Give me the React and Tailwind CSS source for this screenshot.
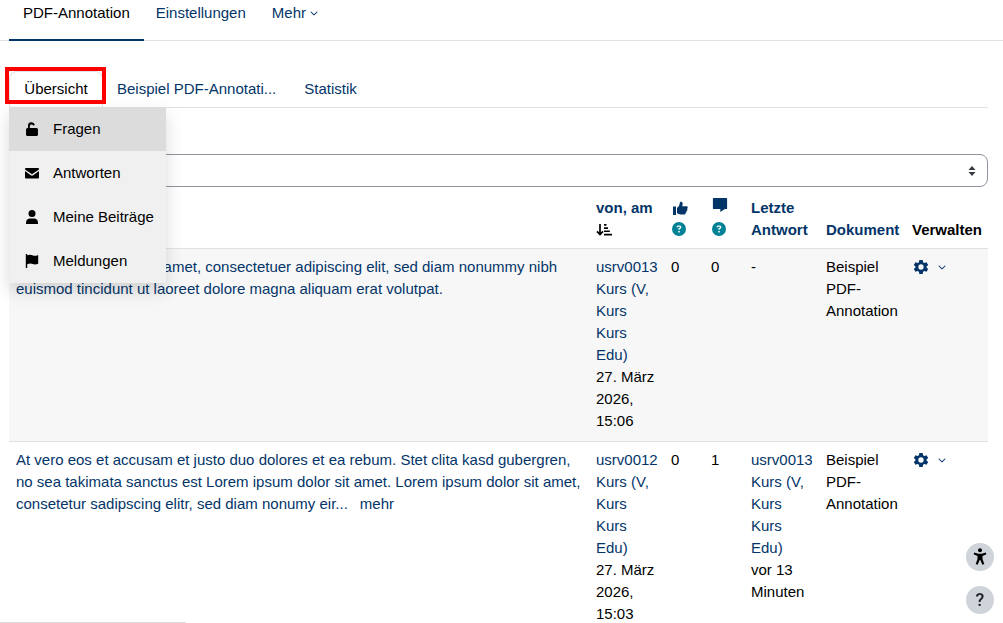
import React from 'react';
import { FaChevronDown, FaCircleQuestion } from 'react-icons/fa6';

function UnlockIcon() {
  return (
    <svg viewBox="0 0 14 14" className="w-[14px] h-[14px] shrink-0" fill="currentColor" aria-hidden="true">
      <path d="M3 6V4a3.500 3.500 0 0 1 6.900-1l-1.700.5A1.800 1.800 0 0 0 4.800 4v2H11.500A1.500 1.500 0 0 1 13 7.500v5A1.500 1.500 0 0 1 11.500 14h-9A1.500 1.500 0 0 1 1 12.500v-5A1.500 1.500 0 0 1 2.500 6z" />
    </svg>
  );
}

function EnvelopeIcon() {
  return (
    <svg viewBox="0 0 14 14" className="w-[14px] h-[14px] shrink-0" fill="currentColor" aria-hidden="true">
      <path d="M0 3a1 1 0 0 1 1-1h12a1 1 0 0 1 1 1v.6L7 8.200 0 3.600z" />
      <path d="M0 5l5.800 4.200a2 2 0 0 0 2.400 0L14 5v6.500a1 1 0 0 1-1 1H1a1 1 0 0 1-1-1z" />
    </svg>
  );
}

function UserIcon() {
  return (
    <svg viewBox="0 0 14 14" className="w-[14px] h-[14px] shrink-0" fill="currentColor" aria-hidden="true">
      <circle cx="7" cy="3.500" r="3.500" />
      <path d="M1 14v-1.500C1 10 3 8.500 5 8.500h4c2 0 4 1.500 4 4V14z" />
    </svg>
  );
}

function FlagIcon() {
  return (
    <svg viewBox="0 0 14 14" className="w-[14px] h-[14px] shrink-0" fill="currentColor" aria-hidden="true">
      <path d="M.8 0h1.400v1.300C5 .2 6.300.8 8 1.500c1.600.6 3 .4 5.200-.5v8.700c-2 .9-3.700 1-5.300.4-1.800-.7-3.200-.8-5.700.1V14H.8z" />
    </svg>
  );
}

function SortIcon() {
  return (
    <svg viewBox="0 0 16 12" className="w-4 h-3" aria-hidden="true">
      <path d="M4 0v10M1 7.300l3 3.200 3-3.200" fill="none" stroke="currentColor" strokeWidth="1.700" />
      <path d="M8 0h2.500v1.700H8zM8 3.200h4v1.700H8zM8 6.400h5.800v1.700H8zM8 9.700h8v1.900H8z" fill="currentColor" />
    </svg>
  );
}

function ThumbsUpIcon() {
  return (
    <svg viewBox="0 0 16 14" className="w-4 h-[14px]" fill="currentColor" aria-hidden="true">
      <path d="M1 5.500h3V14H1z" />
      <path d="M5 6.700c1.700-1 2.500-2.500 2.700-4.500C7.900.9 8.700.6 9.600.9c1.300.5 1.400 2.200.5 4.300h4.200c1.600 0 1.900 1.900.8 2.500.6.900.3 1.800-.6 2.200.3.900-.1 1.600-.8 1.900.1 1-.6 1.700-1.700 1.700H8.600c-1.400 0-2.400-.5-3.600-1.400z" />
    </svg>
  );
}

function CommentIcon() {
  return (
    <svg viewBox="0 0 16 16" className="w-4 h-4" fill="currentColor" aria-hidden="true">
      <path d="M1.500 1h13a.6.6 0 0 1 .6.6v9.800a.6.6 0 0 1-.6.6h-1.700L8.300 15v-3H1.500a.6.6 0 0 1-.6-.6V1.600a.6.6 0 0 1 .6-.6z" />
    </svg>
  );
}

function GearIcon() {
  return (
    <svg viewBox="0 0 24 24" className="w-4 h-4" fill="currentColor" aria-hidden="true">
      <path
        fillRule="evenodd"
        d="M9.500 1.500h5l.6 3.200 2 1.200 3.200-1.100 2.500 4.300-2.500 2.100v1.600l2.500 2.100-2.500 4.300-3.200-1.100-2 1.200-.6 3.200h-5l-.6-3.200-2-1.200-3.200 1.100-2.500-4.300 2.500-2.100v-1.600L1.200 9.100l2.500-4.300 3.200 1.100 2-1.200zM12 8a4 4 0 1 0 0 8 4 4 0 0 0 0-8z"
      />
    </svg>
  );
}

function AccessibilityIcon() {
  return (
    <svg viewBox="0 0 20 20" className="w-5 h-5" fill="currentColor" aria-hidden="true">
      <circle cx="10" cy="3.200" r="2" />
      <path d="M4.200 5.500 8.200 6.700h3.600l4-1.200.6 1.800-3.900 1.700v3l1.800 5-1.900.8-2.100-4.800h-.6l-2.100 4.800-1.900-.8 1.800-5v-3L3.600 7.300z" />
    </svg>
  );
}

function HelpButton({ label }) {
  return (
    <button type="button" aria-label={label} className="block text-[#008196]">
      <FaCircleQuestion size={14} />
    </button>
  );
}

const menuItems = [
  { label: 'Fragen', icon: UnlockIcon, active: true },
  { label: 'Antworten', icon: EnvelopeIcon },
  { label: 'Meine Beiträge', icon: UserIcon },
  { label: 'Meldungen', icon: FlagIcon },
];

const rows = [
  {
    text: 'Lorem ipsum dolor sit amet, consectetuer adipiscing elit, sed diam nonummy nibh euismod tincidunt ut laoreet dolore magna aliquam erat volutpat.',
    author: 'usrv0013 Kurs (V, Kurs Kurs Edu)',
    date: '27. März 2026, 15:06',
    votes: 0,
    answers: 0,
    last: null,
  },
  {
    text: 'At vero eos et accusam et justo duo dolores et ea rebum. Stet clita kasd gubergren, no sea takimata sanctus est Lorem ipsum dolor sit amet. Lorem ipsum dolor sit amet, consetetur sadipscing elitr, sed diam nonumy eir...',
    more: true,
    author: 'usrv0012 Kurs (V, Kurs Kurs Edu)',
    date: '27. März 2026, 15:03',
    votes: 0,
    answers: 1,
    last: { author: 'usrv0013 Kurs (V, Kurs Kurs Edu)', when: 'vor 13 Minuten' },
  },
];

export default function App() {
  return (
    <div className="h-screen overflow-hidden bg-white text-black text-[15px] leading-[22px] font-['Liberation_Sans',Arial,sans-serif]">
      {/* Activity navigation */}
      <nav className="flex h-[41px] pl-[9px] border-b border-[#dee2e6] text-[#043569]">
        <a href="#" className="h-[41px] px-[14px] pt-[2px] text-black border-b-2 border-[#043569]">PDF-Annotation</a>
        <a href="#" className="px-3 pt-[2px]">Einstellungen</a>
        <button type="button" className="flex items-center h-[22px] gap-1 px-[14px] mt-[2px]">
          Mehr <FaChevronDown size={8} />
        </button>
      </nav>

      <main className="pl-[9px] pr-[15px]">
        {/* Tabs with the opened overview menu */}
        <div className="relative mt-[30px] flex h-[37px] border-b border-[#dee2e6] text-[#043569]">
          <a href="#" className="w-[94px] h-[37px] pt-[6px] text-center text-black bg-white border border-b-0 border-[#dee2e6] rounded-t-lg">Übersicht</a>
          <a href="#" className="px-[14px] pt-[7px]">Beispiel PDF-Annotati...</a>
          <a href="#" className="px-[14px] pt-[7px]">Statistik</a>
          <div className="absolute -left-1 -top-1 w-[101px] h-[37px] border-4 border-[#ff0000] z-20 pointer-events-none" />

          <ul className="absolute left-0 top-[36px] z-10 w-[157px] bg-[#f0f0f0] text-black shadow-[0_8px_16px_rgba(0,0,0,0.15)]">
            {menuItems.map(({ label, icon: Icon, active }) => (
              <li key={label}>
                <a href="#" className={`flex items-center h-11 pl-4 gap-[14px] whitespace-nowrap ${active ? 'bg-[#dcdcdc]' : ''}`}>
                  <Icon />
                  {label}
                </a>
              </li>
            ))}
          </ul>
        </div>

        <div className="relative mt-[46px]">
          <select aria-label="Filter" className="block w-full h-[33px] pl-3 appearance-none bg-white border border-[#8f959e] rounded-lg" />
          <svg viewBox="0 0 8 10" className="absolute right-3 top-3 w-2 h-[10px] fill-[#343a40] pointer-events-none" aria-hidden="true">
            <path d="M4 0 7.500 4H.5zM.5 6h7L4 10z" />
          </svg>
        </div>

        <table className="w-full table-fixed border-collapse text-left">
          <colgroup>
            <col />
            <col className="w-[75px]" />
            <col className="w-[40px]" />
            <col className="w-[40px]" />
            <col className="w-[75px]" />
            <col className="w-[86px]" />
            <col className="w-[83px]" />
          </colgroup>
          <thead>
            <tr className="align-bottom text-[#043569] border-b border-[#dee2e6]">
              <th className="px-[7px] pt-[10px] pb-[7px]">Frage</th>
              <th className="px-[7px] pt-[10px] pb-[7px]">
                <a href="#">von, am</a>
                <span className="flex items-center h-[22px] text-black"><SortIcon /></span>
              </th>
              <th className="px-2 pt-[10px] pb-[7px]">
                <a href="#" aria-label="Stimmen" className="flex items-end h-[22px] pb-1"><ThumbsUpIcon /></a>
                <span className="flex items-start h-[22px] pt-[3px]"><HelpButton label="Hilfe zu Stimmen" /></span>
              </th>
              <th className="px-2 pt-[10px] pb-[7px]">
                <a href="#" aria-label="Antworten" className="flex items-start h-[22px]"><CommentIcon /></a>
                <span className="flex items-start h-[22px] pt-[3px]"><HelpButton label="Hilfe zu Antworten" /></span>
              </th>
              <th className="px-[7px] pt-[10px] pb-[7px]"><a href="#">Letzte Antwort</a></th>
              <th className="px-[7px] pt-[10px] pb-[7px]"><a href="#">Dokument</a></th>
              <th className="px-[7px] pt-[10px] pb-[7px] text-black">Verwalten</th>
            </tr>
          </thead>
          <tbody>
            {rows.map((row) => (
              <tr key={row.date} className="align-top border-b border-[#dee2e6] odd:bg-[#f7f7f7]">
                <td className="px-[7px] pt-[7px] pb-[9px] text-[#043569]">
                  <a href="#">{row.text}</a>
                  {row.more && <a href="#" className="ml-3">mehr</a>}
                </td>
                <td className="px-[7px] pt-[7px] pb-[9px]">
                  <a href="#" className="block text-[#043569]">{row.author}</a>
                  {row.date}
                </td>
                <td className="px-[7px] pt-[7px] pb-[9px]">{row.votes}</td>
                <td className="px-[7px] pt-[7px] pb-[9px]">{row.answers}</td>
                <td className="px-[7px] pt-[7px] pb-[9px]">
                  {row.last ? (
                    <>
                      <a href="#" className="block text-[#043569]">{row.last.author}</a>
                      {row.last.when}
                    </>
                  ) : '-'}
                </td>
                <td className="px-[7px] pt-[7px] pb-[9px]">Beispiel PDF-Annotation</td>
                <td className="px-2 pt-[7px] pb-[9px]">
                  <button type="button" aria-label="Verwalten" className="flex items-center h-[22px] gap-[9px] text-[#043569]">
                    <GearIcon />
                    <FaChevronDown size={8} />
                  </button>
                </td>
              </tr>
            ))}
          </tbody>
        </table>
      </main>

      {/* Floating buttons */}
      <div className="fixed right-[9px] bottom-[9px] flex flex-col gap-[15px]">
        <button type="button" aria-label="Barrierefreiheit" className="flex items-center justify-center w-7 h-7 rounded-full bg-[#ced4da]">
          <AccessibilityIcon />
        </button>
        <button type="button" aria-label="Hilfe" className="flex items-center justify-center w-7 h-7 rounded-full bg-[#ced4da] font-[Roboto,sans-serif] text-lg font-medium text-[#1d2125]">
          ?
        </button>
      </div>
      <div className="fixed left-0 bottom-0 w-[186px] h-px bg-[#dcdcdc]" />
    </div>
  );
}
